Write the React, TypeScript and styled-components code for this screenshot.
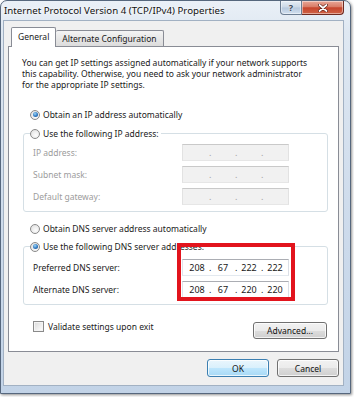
import { createGlobalStyle, styled } from "styled-components";

const GlobalStyle = createGlobalStyle`
  html, body {
    margin: 0;
    padding: 0;
    background: #fff;
  }
  body {
    width: 354px;
    height: 397px;
    overflow: hidden;
    font-family: "Noto Sans", "Open Sans", sans-serif;
    color: #1a1a1a;
  }
  * {
    box-sizing: border-box;
  }
`;

const Page = styled.div`
  position: relative;
  width: 354px;
  height: 397px;
`;

const Window = styled.div`
  width: 351px;
  height: 394px;
  display: flex;
  flex-direction: column;
  border: 1px solid #56677d;
  border-radius: 7px 7px 0 0;
  background: linear-gradient(
    180deg,
    #eaf0f7 0px,
    #dfe8f2 30px,
    #cfdcec 200px,
    #c2d3e7 100%
  );
  box-shadow: 1px 1px 3px rgba(0, 0, 0, 0.45);
`;

const TitleBar = styled.div`
  height: 19px;
  display: flex;
  align-items: flex-start;
  padding: 0 6px 0 3px;
`;

const Title = styled.div`
  flex: 1;
  font-size: 9.7px;
  line-height: 20px;
  color: #111;
  white-space: nowrap;
  text-shadow: 0 0 5px #fff, 0 0 3px #fff;
`;

const CaptionButton = styled.div<{ $close?: boolean }>`
  width: ${({ $close }) => ($close ? "42px" : "22px")};
  height: 14px;
  display: flex;
  align-items: center;
  justify-content: center;
  border: 1px solid ${({ $close }) => ($close ? "#6e2a20" : "#6c7d92")};
  border-top: none;
  border-left: ${({ $close }) => ($close ? "none" : "1px solid #6c7d92")};
  border-radius: ${({ $close }) => ($close ? "0 0 4px 0" : "0 0 0 4px")};
  background: ${({ $close }) =>
    $close
      ? "linear-gradient(180deg, #e9a898 0%, #d97c67 45%, #c7452d 52%, #cf6346 100%)"
      : "linear-gradient(180deg, #e6edf5 0%, #cbd8e7 48%, #b6c8dd 52%, #d2e0f0 100%)"};
  box-shadow: inset 0 0 0 1px rgba(255, 255, 255, 0.45);
  font-size: 9px;
  font-weight: 700;
  color: #3a4656;
  text-shadow: 0 0 2px #fff;
`;

const Client = styled.div`
  margin: 0 6px 0 2px;
  height: 366px;
  display: flex;
  flex-direction: column;
  padding: 6px 4px 8px 4px;
  background: #f0f0f0;
  border: 1px solid #a2b1c3;
`;

const TabStrip = styled.div`
  height: 19px;
  display: flex;
  align-items: flex-end;
  padding-left: 3px;
`;

const Tab = styled.div<{ $active?: boolean }>`
  position: relative;
  z-index: ${({ $active }) => ($active ? 1 : 0)};
  height: ${({ $active }) => ($active ? "20px" : "16px")};
  margin-bottom: ${({ $active }) => ($active ? "-1px" : "0")};
  padding: ${({ $active }) => ($active ? "2px 6px 0" : "1px 6px 0")};
  border: 1px solid #898c95;
  border-bottom: none;
  border-left: ${({ $active }) => ($active ? "1px solid #898c95" : "none")};
  border-radius: 2px 2px 0 0;
  background: ${({ $active }) =>
    $active ? "#fff" : "linear-gradient(180deg, #f4f4f4 0%, #e7e7e7 50%, #dcdcdc 100%)"};
  font-size: 8.5px;
  line-height: 13px;
  white-space: nowrap;
`;

const Panel = styled.div`
  height: 306px;
  display: flex;
  flex-direction: column;
  padding-top: 10px;
  border: 1px solid #898c95;
  background: #fff;
`;

const Intro = styled.p`
  margin: 0 0 0 13px;
  font-size: 8.5px;
  line-height: 11px;
  white-space: nowrap;
`;

const OptionRow = styled.div<{ $top: number }>`
  height: 13px;
  display: flex;
  align-items: center;
  gap: 3px;
  margin: ${({ $top }) => $top}px 0 0 21px;
  font-size: 8.5px;
  white-space: nowrap;
`;

const Radio = styled.span<{ $checked?: boolean }>`
  width: 10px;
  height: 10px;
  flex: none;
  display: flex;
  align-items: center;
  justify-content: center;
  border: 1px solid #8a8a8a;
  border-radius: 50%;
  background: radial-gradient(circle at 60% 65%, #fdfdfd 0%, #e6e6e6 70%, #d6d6d6 100%);

  &::after {
    content: "";
    display: ${({ $checked }) => ($checked ? "block" : "none")};
    width: 5px;
    height: 5px;
    border-radius: 50%;
    background: radial-gradient(circle at 40% 35%, #9fd6f6 0%, #2f79c2 55%, #16457f 100%);
  }
`;

const Group = styled.fieldset<{ $top: number }>`
  margin: ${({ $top }) => $top}px 10px 0 14px;
  padding: 0 0 6px 0;
  border: 1px solid #d5dfe5;
  border-radius: 3px;
  min-width: 0;
`;

const Legend = styled.legend`
  height: 13px;
  display: flex;
  align-items: center;
  gap: 3px;
  margin-left: 6px;
  padding: 0 2px 0 0;
  font-size: 8.5px;
  white-space: nowrap;
`;

const Fields = styled.div<{ $top: number }>`
  display: flex;
  flex-direction: column;
  gap: 5px;
  margin-top: ${({ $top }) => $top}px;
  padding-left: 9px;
`;

const FieldRow = styled.div`
  height: 17px;
  display: flex;
  align-items: center;
`;

const FieldLabel = styled.span<{ $disabled?: boolean }>`
  width: 149px;
  font-size: 8.5px;
  color: ${({ $disabled }) => ($disabled ? "#9c9c9c" : "#1a1a1a")};
  white-space: nowrap;
`;

const AddressBox = styled.div<{ $disabled?: boolean }>`
  width: 107px;
  height: 17px;
  display: flex;
  align-items: center;
  padding-left: 2px;
  border: 1px solid;
  border-color: ${({ $disabled }) =>
    $disabled ? "#c9c9c9 #e2e2e2 #e6e6e6 #e2e2e2" : "#abadb3 #dbdfe6 #e3e9ef #e2e3ea"};
  background: ${({ $disabled }) => ($disabled ? "#f1f1f1" : "#fff")};
  color: ${({ $disabled }) => ($disabled ? "#a3a3a3" : "#1a1a1a")};
  font-size: 9px;
`;

const Octet = styled.span`
  width: 24px;
  text-align: center;
`;

const Dot = styled.span`
  width: 2px;
  text-align: center;
`;

const BottomRow = styled.div`
  display: flex;
  align-items: flex-start;
  margin: 16px 11px 0 24px;
`;

const Checkbox = styled.span`
  width: 11px;
  height: 11px;
  flex: none;
  border: 1px solid #8a8a8a;
  background: linear-gradient(135deg, #d9d9d9 0%, #f0f0f0 60%, #fff 100%);
  box-shadow: inset 0 0 0 1px #f4f4f4;
`;

const CheckLabel = styled.span`
  flex: 1;
  margin-left: 4px;
  font-size: 8.5px;
  line-height: 11px;
  white-space: nowrap;
`;

const Button = styled.div<{ $width: number; $height: number; $primary?: boolean }>`
  width: ${({ $width }) => $width}px;
  height: ${({ $height }) => $height}px;
  display: flex;
  align-items: center;
  justify-content: center;
  border: 1px solid ${({ $primary }) => ($primary ? "#3c7fb1" : "#707070")};
  border-radius: 3px;
  background: ${({ $primary }) =>
    $primary
      ? "linear-gradient(180deg, #eaf6fd 0%, #d9f0fc 50%, #bee6fd 51%, #a7d9f5 100%)"
      : "linear-gradient(180deg, #f2f2f2 0%, #ebebeb 50%, #dddddd 51%, #cfcfcf 100%)"};
  box-shadow: inset 0 0 0 1px rgba(255, 255, 255, 0.75);
  font-size: 8.5px;
  color: #111;
`;

const AdvancedButton = styled(Button)`
  margin-top: 1px;
`;

const ButtonBar = styled.div`
  display: flex;
  justify-content: flex-end;
  gap: 8px;
  margin-top: 7px;
`;

const Highlight = styled.div`
  position: absolute;
  left: 177px;
  top: 243px;
  width: 118px;
  height: 58px;
  border: 4px solid #e2141d;
  pointer-events: none;
`;

const Address = ({ value, disabled }: { value?: string[]; disabled?: boolean }) => {
  const parts = value ?? ["", "", "", ""];
  return (
    <AddressBox $disabled={disabled}>
      {parts.map((p, i) => (
        <span key={i} style={{ display: "contents" }}>
          <Octet>{p}</Octet>
          {i < 3 && <Dot>.</Dot>}
        </span>
      ))}
    </AddressBox>
  );
};

export default function App() {
  return (
    <Page>
      <GlobalStyle />
      <Window>
        <TitleBar>
          <Title>Internet Protocol Version 4 (TCP/IPv4) Properties</Title>
          <CaptionButton>?</CaptionButton>
          <CaptionButton $close>
            <svg width="10" height="8" viewBox="0 0 10 8">
              <path d="M1.5 1 L8.5 7 M8.5 1 L1.5 7" stroke="#5a1d14" strokeWidth="3" strokeLinecap="round" />
              <path d="M1.5 1 L8.5 7 M8.5 1 L1.5 7" stroke="#fff" strokeWidth="1.7" strokeLinecap="round" />
            </svg>
          </CaptionButton>
        </TitleBar>
        <Client>
          <TabStrip>
            <Tab $active>General</Tab>
            <Tab>Alternate Configuration</Tab>
          </TabStrip>
          <Panel>
            <Intro>
              You can get IP settings assigned automatically if your network supports
              <br />
              this capability. Otherwise, you need to ask your network administrator
              <br />
              for the appropriate IP settings.
            </Intro>
            <OptionRow $top={18}>
              <Radio $checked />
              Obtain an IP address automatically
            </OptionRow>
            <Group $top={6}>
              <Legend>
                <Radio />
                Use the following IP address:
              </Legend>
              <Fields $top={4}>
                <FieldRow>
                  <FieldLabel $disabled>IP address:</FieldLabel>
                  <Address disabled />
                </FieldRow>
                <FieldRow>
                  <FieldLabel $disabled>Subnet mask:</FieldLabel>
                  <Address disabled />
                </FieldRow>
                <FieldRow>
                  <FieldLabel $disabled>Default gateway:</FieldLabel>
                  <Address disabled />
                </FieldRow>
              </Fields>
            </Group>
            <OptionRow $top={10}>
              <Radio />
              Obtain DNS server address automatically
            </OptionRow>
            <Group $top={5}>
              <Legend>
                <Radio $checked />
                Use the following DNS server addresses:
              </Legend>
              <Fields $top={6}>
                <FieldRow>
                  <FieldLabel>Preferred DNS server:</FieldLabel>
                  <Address value={["208", "67", "222", "222"]} />
                </FieldRow>
                <FieldRow>
                  <FieldLabel>Alternate DNS server:</FieldLabel>
                  <Address value={["208", "67", "220", "220"]} />
                </FieldRow>
              </Fields>
            </Group>
            <BottomRow>
              <Checkbox />
              <CheckLabel>Validate settings upon exit</CheckLabel>
              <AdvancedButton $width={74} $height={17}>
                Advanced...
              </AdvancedButton>
            </BottomRow>
          </Panel>
          <ButtonBar>
            <Button $width={62} $height={18} $primary>
              OK
            </Button>
            <Button $width={62} $height={18}>
              Cancel
            </Button>
          </ButtonBar>
        </Client>
      </Window>
      <Highlight />
    </Page>
  );
}
